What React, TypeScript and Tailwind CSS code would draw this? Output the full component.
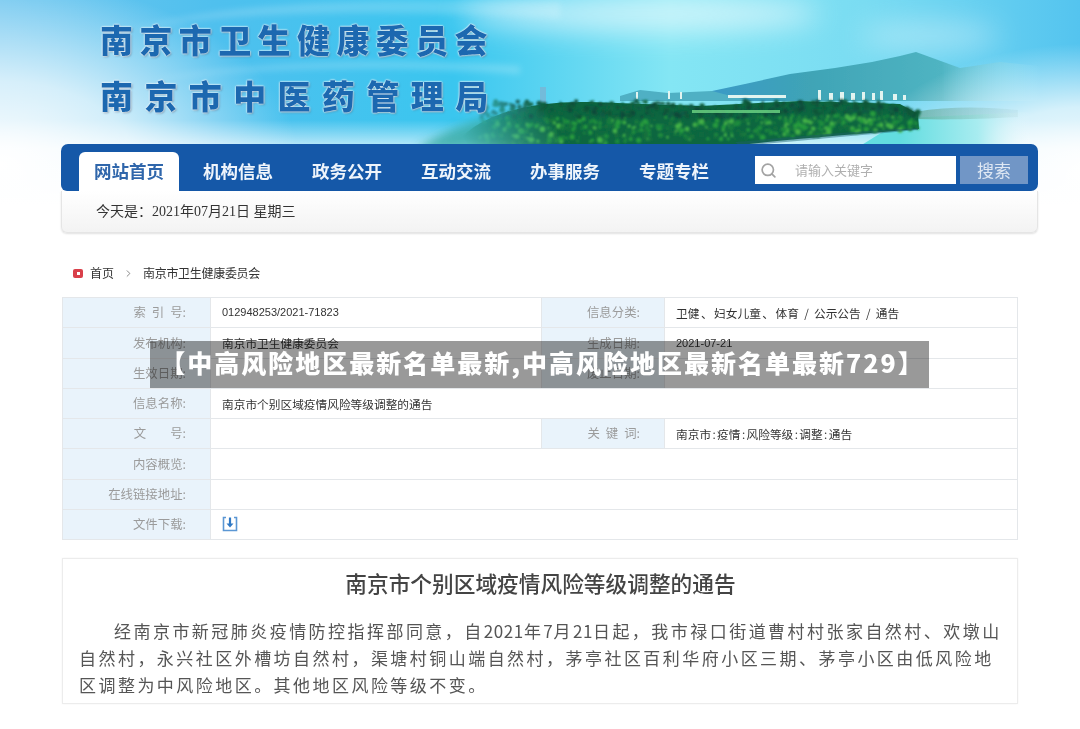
import { ChevronRight, Search } from "lucide-react";

const cjk = "font-['Noto_Sans_CJK_SC',sans-serif]";

function rng(seed: number) {
  let s = seed;
  return () => {
    s = (s * 16807) % 2147483647;
    return (s - 1) / 2147483646;
  };
}

function forestDots() {
  const r = rng(4711);
  const darks = ["#0f5f3e", "#0c5538", "#0a4a3a", "#11663f", "#0d5a44"];
  const mids = ["#157a3d", "#1c8a3c", "#12703e", "#259a3e", "#0f6a40"];
  const dots: { x: number; y: number; r: number; c: string }[] = [];
  for (let i = 0; i < 1000; i++) {
    const x = 480 + r() * 438;
    const t = (x - 480) / 438;
    const top = 101 + (t > 0.45 && t < 0.6 ? 5 : 0) + (t > 0.9 ? (t - 0.9) * 100 : 0);
    const bottom = 144 - t * t * 15;
    const y = top + r() * (bottom - top);
    const depth = (y - top) / (bottom - top);
    const pool = depth < 0.4 ? darks : mids;
    const bright = depth > 0.45 && r() < 0.2;
    dots.push({ x, y, r: 0.9 + r() * 2, c: bright ? "#43b046" : pool[Math.floor(r() * pool.length)] });
  }
  return dots;
}

function Scenery() {
  const dots = forestDots();
  return (
    <svg className="absolute left-0 top-0 block" width="1080" height="240" viewBox="0 0 1080 240" aria-hidden="true">
      <defs>
        <linearGradient id="sky" x1="0" y1="0" x2="1" y2="0">
          <stop offset="0" stopColor="#6fc6ef" />
          <stop offset="0.2" stopColor="#4fc0ee" />
          <stop offset="0.42" stopColor="#3ac6ef" />
          <stop offset="0.62" stopColor="#84e6f4" />
          <stop offset="0.8" stopColor="#7adcf2" />
          <stop offset="1" stopColor="#54c4ef" />
        </linearGradient>
        <linearGradient id="fade" x1="0" y1="0" x2="0" y2="1">
          <stop offset="0" stopColor="#fff" stopOpacity="0" />
          <stop offset="0.5" stopColor="#fff" stopOpacity="0" />
          <stop offset="0.62" stopColor="#fff" stopOpacity="0.7" />
          <stop offset="0.85" stopColor="#fff" stopOpacity="1" />
        </linearGradient>
        <radialGradient id="leftfade" gradientUnits="userSpaceOnUse" cx="0" cy="165" r="300" gradientTransform="translate(0 165) scale(1 0.62) translate(0 -165)">
          <stop offset="0" stopColor="#fff" stopOpacity="1" />
          <stop offset="0.45" stopColor="#fff" stopOpacity="0.72" />
          <stop offset="1" stopColor="#fff" stopOpacity="0" />
        </radialGradient>
        <radialGradient id="rightfade" gradientUnits="userSpaceOnUse" cx="1090" cy="170" r="230" gradientTransform="translate(0 170) scale(1 0.55) translate(0 -170)">
          <stop offset="0" stopColor="#fff" stopOpacity="1" />
          <stop offset="0.5" stopColor="#fff" stopOpacity="0.75" />
          <stop offset="1" stopColor="#fff" stopOpacity="0" />
        </radialGradient>
        <linearGradient id="mountfade" x1="712" y1="0" x2="1040" y2="0" gradientUnits="userSpaceOnUse">
          <stop offset="0" stopColor="#3a9ac6" />
          <stop offset="0.3" stopColor="#3fa4b6" />
          <stop offset="0.7" stopColor="#4fb4c2" />
          <stop offset="1" stopColor="#a8e6f2" stopOpacity="0" />
        </linearGradient>
        <linearGradient id="water" x1="900" y1="0" x2="1030" y2="0" gradientUnits="userSpaceOnUse">
          <stop offset="0" stopColor="#62dde0" />
          <stop offset="0.6" stopColor="#a8ecf0" />
          <stop offset="1" stopColor="#e8f7fb" stopOpacity="0" />
        </linearGradient>
        <linearGradient id="shore" x1="920" y1="0" x2="1020" y2="0" gradientUnits="userSpaceOnUse">
          <stop offset="0" stopColor="#5f9a80" stopOpacity="0.55" />
          <stop offset="1" stopColor="#8fb8b8" stopOpacity="0.1" />
        </linearGradient>
        <linearGradient id="forestMaskGrad" gradientUnits="userSpaceOnUse" x1="470" y1="150" x2="545" y2="108">
          <stop offset="0" stopColor="#000" />
          <stop offset="1" stopColor="#fff" />
        </linearGradient>
        <mask id="forestMask" maskUnits="userSpaceOnUse" x="420" y="80" width="520" height="80">
          <rect x="420" y="80" width="520" height="80" fill="url(#forestMaskGrad)" />
        </mask>
        <filter id="soft" x="-60%" y="-300%" width="220%" height="700%"><feGaussianBlur stdDeviation="14" /></filter>
        <filter id="arc" x="-20%" y="-100%" width="140%" height="300%"><feGaussianBlur stdDeviation="3" /></filter>
        <filter id="teal" x="-30%" y="-30%" width="160%" height="160%"><feGaussianBlur stdDeviation="5" /></filter>
        <filter id="soft2" x="-5%" y="-5%" width="110%" height="110%"><feGaussianBlur stdDeviation="0.5" /></filter>
        <filter id="leaf" x="-5%" y="-5%" width="110%" height="110%"><feGaussianBlur stdDeviation="0.8" /></filter>
      </defs>
      <rect width="1080" height="240" fill="url(#sky)" />
      <ellipse cx="640" cy="14" rx="180" ry="18" fill="#fff" opacity="0.6" filter="url(#soft)" />
      <ellipse cx="930" cy="36" rx="70" ry="14" fill="#fff" opacity="0.35" filter="url(#soft)" />
      <path d="M130 30 C220 10 380 10 560 18 L560 2 C380 -4 220 2 130 30 Z" fill="#fff" opacity="0.18" filter="url(#arc)" />
      <path d="M150 80 C260 66 400 66 520 74 L520 66 C400 58 260 60 150 80 Z" fill="#fff" opacity="0.2" filter="url(#arc)" />
      <path d="M712 91 L745 84 L790 74 L835 68 L872 62 L900 56 L916 52 L960 68 L1000 62 L1040 66 L1040 101 L712 101 Z" fill="url(#mountfade)" filter="url(#soft2)" />
      <path d="M620 96 L640 90 L668 93 L712 91 L750 101 L620 101 Z" fill="#4fb0c4" filter="url(#soft2)" />
      <g fill="#e2f4f0" filter="url(#soft2)">
        <rect x="636" y="92" width="2" height="7" /><rect x="668" y="91" width="2" height="8" /><rect x="680" y="92" width="2" height="7" />
        <rect x="728" y="95" width="58" height="3" />
        <rect x="818" y="90" width="3" height="10" /><rect x="829" y="93" width="4" height="7" /><rect x="840" y="92" width="4" height="8" />
        <rect x="851" y="93" width="4" height="7" /><rect x="862" y="92" width="3" height="8" /><rect x="872" y="93" width="3" height="7" />
        <rect x="880" y="91" width="3" height="9" /><rect x="893" y="94" width="4" height="6" /><rect x="903" y="95" width="3" height="5" />
      </g>
      <rect x="540" y="87" width="6" height="16" fill="#7fb0d0" opacity="0.7" />
      <rect width="1080" height="240" fill="url(#fade)" />
      <rect width="1080" height="240" fill="url(#leftfade)" />
      <rect width="1080" height="240" fill="url(#rightfade)" />
      <path d="M905 118 L1030 112 L1030 146 L860 146 Z" fill="url(#water)" />
      <path d="M915 112 C950 106 985 107 1018 110 L1018 117 C980 119 950 120 915 119 Z" fill="url(#shore)" filter="url(#soft2)" />
      <path d="M415 150 C445 130 480 116 530 110 L560 150 Z" fill="#2fa69e" opacity="0.75" filter="url(#teal)" />
      <g mask="url(#forestMask)">
        <path d="M470 130 C500 108 545 101 590 102 L700 106 L800 101 L900 104 L918 114 L919 129 C860 134 800 138 730 146 L450 146 Z" fill="#0f6640" filter="url(#soft2)" />
        <g filter="url(#leaf)">
          {dots.map((d, i) => (
            <circle key={i} cx={d.x} cy={d.y} r={d.r} fill={d.c} />
          ))}
        </g>
      </g>
      <rect x="692" y="110" width="88" height="3" fill="#74e08a" opacity="0.75" filter="url(#soft2)" />
      <path d="M735 142 C800 136 860 131 918 128 L918 130 C860 135 800 141 740 146 Z" fill="#1f5f6a" opacity="0.45" />
    </svg>
  );
}

function Label({ children }: { children: React.ReactNode }) {
  return (
    <div className="flex items-center justify-end whitespace-pre bg-[#e9f3fb] pr-[24px] text-[12.4px] text-[#9b9b9b] border-b border-r border-[#e4e7ea]">
      {children}
    </div>
  );
}

function Value({ children, wide }: { children?: React.ReactNode; wide?: boolean }) {
  return (
    <div className={`flex items-center whitespace-pre bg-white pl-[11px] text-[11.7px] text-[#333] border-b border-r border-[#e4e7ea] ${wide ? "col-span-3" : ""}`}>
      {children}
    </div>
  );
}

function Colon() {
  return <span className="mx-[1.4px]">:</span>;
}

function Pause() {
  return <span className="mx-[1.5px]">、</span>;
}

export default function App() {
  return (
    <div className={`relative h-[729px] w-[1080px] overflow-hidden bg-white ${cjk} blur-[0.35px]`}>
      <Scenery />

      <header className="relative px-[61px] pt-[22px]">
        <div className="pl-[39px] text-[33px] font-black leading-[35px] text-[#1c68b0] whitespace-nowrap [text-shadow:0_0_2px_#fff,0_0_2px_#fff,1px_1px_2px_rgba(60,80,110,0.6)]">
          <div className="tracking-[6.4px]">南京市卫生健康委员会</div>
          <div className="mt-[21px] tracking-[11.4px]">南京市中医药管理局</div>
        </div>

        <div className="mt-[31px] w-[977px]">
          <nav className="flex h-[47px] items-end rounded-[7px] rounded-bl-[6px] bg-[#1558a8] pl-[18px] pr-[10px]">
            <div className="flex h-[39px] w-[100px] items-center justify-center rounded-t-[6px] bg-white text-[17.5px] font-bold text-[#2f66ab]">
              网站首页
            </div>
            <ul className="ml-[24px] flex h-[39px] items-center gap-[39px] text-[17.5px] font-bold text-[#eef4fb]">
              <li>机构信息</li>
              <li>政务公开</li>
              <li>互动交流</li>
              <li>办事服务</li>
              <li>专题专栏</li>
            </ul>
            <div className="ml-[46px] mb-[7px] flex h-[28px] w-[201px] items-center bg-white pl-[5px]">
              <Search size={17} strokeWidth={2.4} className="text-[#a3a3a3]" />
              <span className="ml-[18px] text-[13px] text-[#b0b0b0]">请输入关键字</span>
            </div>
            <div className="ml-[4px] mb-[7px] flex h-[28px] w-[68px] items-center justify-center bg-[#7196c6] text-[17px] text-[#dfe8f3]">
              搜索
            </div>
          </nav>
          <div className="flex h-[42px] items-center rounded-b-[6px] border border-t-0 border-[#e5e5e5] bg-gradient-to-b from-white to-[#f3f3f3] pl-[34px] text-[14px] text-[#333] shadow-[0_1px_2px_rgba(0,0,0,0.12)] font-['Liberation_Serif','Noto_Sans_CJK_SC',serif]">
            今天是：2021年07月21日&nbsp;星期三
          </div>
        </div>
      </header>

      <main className="relative pl-[62px] pr-[62px]">
        <div className="mt-[32px] flex h-[16px] items-center pl-[11px] text-[12px] text-[#333]">
          <span className="flex h-[9px] w-[10px] items-center justify-center rounded-[2px] bg-[#d9404a]">
            <span className="h-[3px] w-[3px] bg-white" />
          </span>
          <span className="ml-[7px]">首页</span>
          <ChevronRight size={11} strokeWidth={1.5} className="ml-[9px] mr-[9px] text-[#555]" />
          <span className="tracking-[-0.3px]">南京市卫生健康委员会</span>
        </div>

        <section className="mt-[16px] grid h-[243px] w-[956px] grid-cols-[148px_331px_123px_1fr] grid-rows-8 border-l border-t border-[#e4e7ea]">
          <Label><span className="tracking-[6px]">索引</span>号:</Label>
          <Value><span className="font-['Liberation_Sans',sans-serif] text-[11px]">012948253/2021-71823</span></Value>
          <Label>信息分类:</Label>
          <Value>卫健<Pause />妇女儿童<Pause />体育  /  公示公告  /  通告</Value>

          <Label>发布机构:</Label>
          <Value>南京市卫生健康委员会</Value>
          <Label>生成日期:</Label>
          <Value><span className="font-['Liberation_Sans',sans-serif] text-[11px]">2021-07-21</span></Value>

          <Label>生效日期:</Label>
          <Value />
          <Label>废止日期:</Label>
          <Value />

          <Label>信息名称:</Label>
          <Value wide>南京市个别区域疫情风险等级调整的通告</Value>

          <Label><span className="mr-[24px]">文</span>号:</Label>
          <Value />
          <Label><span className="tracking-[6px]">关键</span>词:</Label>
          <Value>南京市<Colon />疫情<Colon />风险等级<Colon />调整<Colon />通告</Value>

          <Label>内容概览:</Label>
          <Value wide />

          <Label>在线链接地址:</Label>
          <Value wide />

          <Label>文件下载:</Label>
          <Value wide>
            <svg width="16" height="16" viewBox="0 0 16 16" fill="none" aria-hidden="true">
              <path d="M4 1.5H1.5v13h13v-13H12" stroke="#5b97d4" strokeWidth="1.6" />
              <path d="M8 1.5v8" stroke="#2f78c4" strokeWidth="2.2" />
              <path d="M4.5 7.5 8 11.5l3.5-4z" fill="#2f78c4" />
            </svg>
          </Value>
        </section>

        <article className="mt-[18px] h-[146px] w-[956px] border border-[#ececec] pl-[16px] pr-[15px] text-[#555] shadow-[0_0_2px_rgba(0,0,0,0.05)]">
          <h1 className="mt-[11px] text-center text-[21.7px] font-medium leading-[26px] text-[#444]">
            南京市个别区域疫情风险等级调整的通告
          </h1>
          <p className="mt-[21px] whitespace-nowrap text-[17px] leading-[27px] tracking-[2.46px]">
            <span className="ml-[35px]">
              经南京市新冠肺炎疫情防控指挥部同意，自<span className="tracking-[0.6px]">2021</span>年<span className="tracking-[0.6px]">7</span>月<span className="tracking-[0.6px]">21</span>日起，我市禄口街道曹村村张家自然村、欢墩山
            </span>
            <br />
            自然村，永兴社区外槽坊自然村，渠塘村铜山端自然村，茅亭社区百利华府小区三期、茅亭小区由低风险地
            <br />
            区调整为中风险地区。其他地区风险等级不变。
          </p>
        </article>
      </main>

      <div className="absolute left-[150px] top-[341px] flex h-[47px] w-[779px] items-center justify-center whitespace-nowrap bg-black/40 pb-[3px] pl-[6px] text-[25px] font-black tracking-[2px] text-white">
        【中高风险地区最新名单最新,中高风险地区最新名单最新729】
      </div>
    </div>
  );
}
